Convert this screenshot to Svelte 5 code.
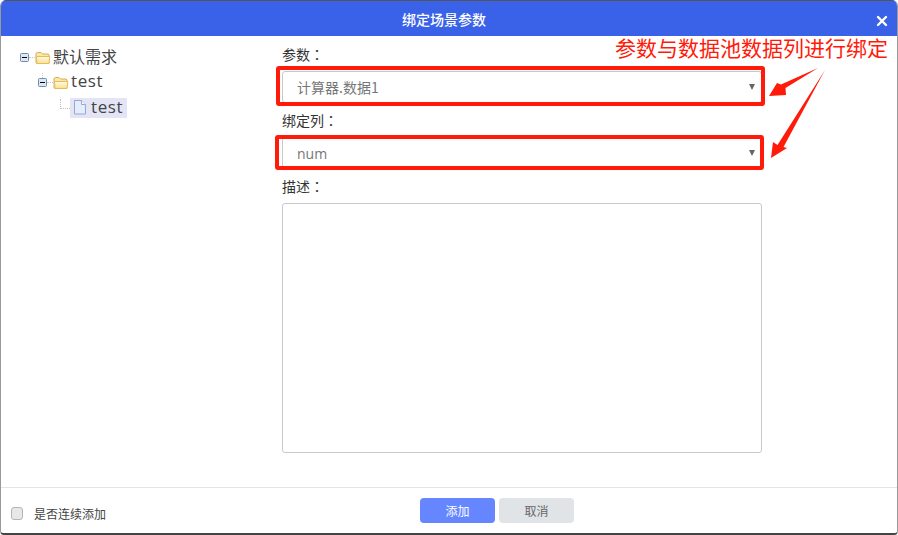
<script>
  const colon = '：';
</script>

{#snippet folder()}
  <svg class="ico" width="16" height="14" viewBox="0 0 16 14">
    <defs>
      <linearGradient id="ff" x1="0" y1="0" x2="0" y2="1">
        <stop offset="0" stop-color="#fffbe2"/>
        <stop offset="1" stop-color="#fbe08c"/>
      </linearGradient>
    </defs>
    <path d="M1 3 Q1 1.500 2.500 1.500 H6 L7.500 3 H13 Q14 3 14 4 V11.500 Q14 12.500 13 12.500 H2.500 Q1 12.500 1 11.500 Z" fill="#fbe8a4" stroke="#d8ad55"/>
    <path d="M1.500 5.500 H14.800 L14 12.500 H2 Z" fill="url(#ff)" stroke="#e3bb66"/>
  </svg>
{/snippet}
{#snippet toggle()}
  <svg class="tog" width="9" height="9" viewBox="0 0 9 9">
    <rect x=".5" y=".5" width="8" height="8" rx="1" fill="#dfe6ee" stroke="#6a8fb6"/>
    <path d="M2 4.500 H7" stroke="#000" stroke-width="1.200"/>
  </svg>
{/snippet}

<div class="dialog">
  <header class="head">
    <span>绑定场景参数</span>
    <svg class="close" width="12" height="12" viewBox="0 0 12 12"><path d="M2 2 L10 10 M10 2 L2 10" stroke="#fff" stroke-width="2.400" stroke-linecap="round"/></svg>
  </header>

  <div class="body">
    <aside class="tree">
      <div class="node n1">{@render toggle()}<i class="dash"></i>{@render folder()}<span>默认需求</span></div>
      <div class="node n2">{@render toggle()}<i class="dash"></i>{@render folder()}<span>test</span></div>
      <div class="node n3">
        <i class="elbow"></i>
        <span class="sel">
          <svg width="14" height="15" viewBox="0 0 14 15">
            <path d="M1.500 .5 H8.500 L12.500 4.500 V14 H1.500 Z" fill="#e4edfc" stroke="#9aa7d0"/>
            <path d="M8.500 .5 V4.500 H12.500" fill="#fff" stroke="#9aa7d0"/>
          </svg>
          <span class="leaf">test</span>
        </span>
      </div>
    </aside>

    <form class="form">
      <label class="lbl" for="p">参数<span class="colon">{colon}</span></label>
      <div class="select" id="p"><span>计算器.数据1</span><i class="caret"></i></div>
      <label class="lbl" for="c">绑定列<span class="colon">{colon}</span></label>
      <div class="select" id="c"><span class="num">num</span><i class="caret"></i></div>
      <label class="lbl" for="d">描述<span class="colon">{colon}</span></label>
      <div class="area" id="d"></div>
    </form>
  </div>

  <footer class="foot">
    <div class="check"><i class="box"></i><span>是否连续添加</span></div>
    <div class="btns">
      <button class="btn ok">添加</button>
      <button class="btn cancel">取消</button>
    </div>
  </footer>

  <i class="mark m1"></i>
  <i class="mark m2"></i>
  <div class="note">参数与数据池数据列进行绑定</div>
  <svg class="arrows" width="898" height="535" viewBox="0 0 898 535">
    <path d="M818 68 L785.500 88 L786 95 L769 96 L777 83 L781 84.500 Z" fill="#ff1a0a"/>
    <path d="M825 70 L783.500 147 L787 148 L771 158 L773 142 L777.500 145 Z" fill="#ff1a0a"/>
  </svg>
</div>

<style>
  :global(body) { margin: 0; background: #fff; }
  * { box-sizing: border-box; }
  .dialog {
    position: relative;
    width: 898px;
    height: 535px;
    display: flex;
    flex-direction: column;
    background: #fff;
    border: 1px solid #999;
    border-top: 0;
    border-bottom: 2px solid #444;
    border-radius: 6px 6px 4px 4px;
    overflow: hidden;
    font-family: "Noto Sans CJK SC", "Liberation Sans", sans-serif;
    color: #333;
  }
  .head {
    height: 36px;
    flex: none;
    display: flex;
    align-items: center;
    justify-content: center;
    position: relative;
    padding-right: 10px;
    background: #3a62e8;
    border-top: 1px solid #555;
    color: #fff;
    font-size: 14px;
    font-weight: 500;
  }
  .close { position: absolute; right: 9px; top: 14px; }
  .body { flex: 1; display: flex; min-height: 0; }
  .tree { width: 281px; padding: 9px 0 0 19px; font-size: 16px; color: #444; }
  .node { height: 25px; display: flex; align-items: center; font-family: "Noto Sans CJK SC", sans-serif; }
  .node > span { line-height: 20px; margin-top: -3px; }
  .n2 { padding-left: 18px; font-family: "Open Sans", sans-serif; font-size: 17px; letter-spacing: .6px; position: relative; }
  .n2::before { content: ""; position: absolute; left: 22px; top: 3px; height: 5px; border-left: 1px dotted #c8c8c8; }
  .n2 > span { margin-top: -3px; }
  .n3 { padding-left: 40px; font-family: "Open Sans", sans-serif; font-size: 17px; letter-spacing: .6px; }
  .node.n3 > span { margin-top: 0; }
  .leaf { margin-top: -1px; }
  .tog { flex: none; }
  .dash { width: 6px; height: 0; border-top: 1px dotted #c8c8c8; flex: none; }
  .ico { flex: none; margin-right: 2px; }
  .elbow { width: 10px; height: 10px; border-left: 1px dotted #c0c0c0; border-bottom: 1px dotted #c0c0c0; margin-top: -8px; flex: none; }
  .sel { display: flex; align-items: center; height: 20px; background: #e3e5f6; padding: 0 4px 0 3px; gap: 4px; }
  .form { width: 480px; padding-top: 10px; display: flex; flex-direction: column; }
  .lbl { height: 25px; font-size: 14px; line-height: 16px; color: #333; }
  .colon { font-family: "Noto Sans CJK TC", sans-serif; }
  .select {
    height: 32px;
    flex: none;
    margin-bottom: 9px;
    border: 1px solid #c8c8c8;
    border-radius: 3px;
    background: #fff;
    display: flex;
    align-items: center;
    justify-content: space-between;
    padding: 0 6px 0 14px;
    font-size: 14px;
    color: #777;
  }
  .num { font-family: "Open Sans", sans-serif; font-size: 14px; }
  .caret { width: 0; height: 0; border-left: 3px solid transparent; border-right: 3px solid transparent; border-top: 6px solid #666; margin-top: -1px; }
  .area { height: 250px; border: 1px solid #c8c8c8; border-radius: 3px; }
  .foot {
    height: 46px;
    flex: none;
    border-top: 1px solid #e4e4e4;
    position: relative;
    display: flex;
    justify-content: center;
    padding: 10px 0 0 96px;
  }
  .check { position: absolute; left: 10px; top: 17px; display: flex; align-items: center; gap: 11px; font-size: 12px; color: #444; }
  .box { width: 12px; height: 13px; background: #e8e8e8; border: 1px solid #b5b5b5; border-radius: 3px; }
  .btns { display: flex; gap: 4px; }
  .btn { width: 75px; height: 25px; border: 0; border-radius: 4px; font: inherit; font-size: 12px; padding: 0; }
  .ok { background: #6586ff; color: #fff; }
  .cancel { background: #e1e4e6; color: #666; }
  .mark { position: absolute; border: 4px solid #ff1a0a; border-radius: 3px; left: 275px; pointer-events: none; }
  .m1 { top: 66px; width: 489px; height: 40px; }
  .m2 { top: 135px; width: 489px; height: 35px; left: 274px; }
  .note { position: absolute; left: 614px; top: 34px; font-size: 21px; line-height: 27px; color: #ff1a0a; white-space: nowrap; }
  .arrows { position: absolute; left: -1px; top: 0; pointer-events: none; }
</style>
